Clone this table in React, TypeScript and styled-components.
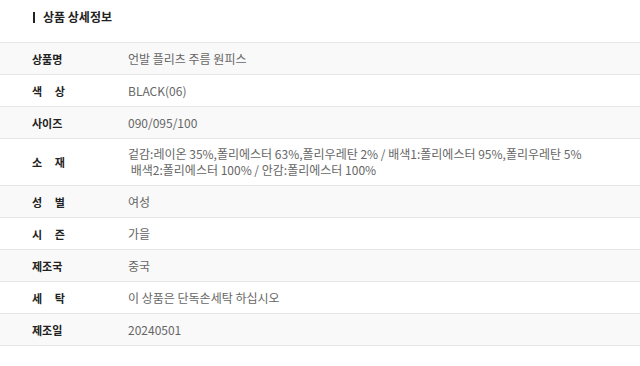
import styled, { createGlobalStyle } from 'styled-components';

const GlobalStyle = createGlobalStyle`
  html, body {
    margin: 0;
    padding: 0;
    background: #ffffff;
  }
  body {
    font-family: "Noto Sans CJK KR", "Noto Sans", sans-serif;
    color: #222;
  }
`;

type Spec = { label: string; spaced?: boolean; value: string[] };

const SPECS: Spec[] = [
  { label: '상품명', value: ['언발 플리츠 주름 원피스'] },
  { label: '색상', spaced: true, value: ['BLACK(06)'] },
  { label: '사이즈', value: ['090/095/100'] },
  {
    label: '소재',
    spaced: true,
    value: [
      '겉감:레이온 35%,폴리에스터 63%,폴리우레탄 2% / 배색1:폴리에스터 95%,폴리우레탄 5%',
      ' 배색2:폴리에스터 100% / 안감:폴리에스터 100%',
    ],
  },
  { label: '성별', spaced: true, value: ['여성'] },
  { label: '시즌', spaced: true, value: ['가을'] },
  { label: '제조국', value: ['중국'] },
  { label: '세탁', spaced: true, value: ['이 상품은 단독손세탁 하십시오'] },
  { label: '제조일', value: ['20240501'] },
];

const Section = styled.section`
  width: 640px;
  padding-top: 8px;
`;

const Title = styled.h2`
  display: flex;
  align-items: center;
  gap: 8px;
  height: 18px;
  margin: 0 0 16px;
  padding-left: 33px;
  font-size: 12px;
  font-weight: 700;
  color: #222;
  line-height: 18px;

  &::before {
    content: '';
    display: block;
    width: 2px;
    height: 11px;
    background: #222;
  }
`;

const Table = styled.div`
  border-top: 1px solid #e6e6e6;
`;

const Row = styled.div<{ $shade: boolean }>`
  display: grid;
  grid-template-columns: 128px 1fr;
  align-items: center;
  min-height: 31px;
  background: ${p => (p.$shade ? '#f9f9f9' : '#ffffff')};
  border-bottom: 1px solid #e6e6e6;
`;

const Label = styled.div`
  padding-left: 32px;
  font-size: 11px;
  font-weight: 700;
  color: #222;
  line-height: 16px;
`;

const Spaced = styled.span`
  display: inline-block;
  width: 33px;
  text-align: justify;
  text-align-last: justify;
`;

const Value = styled.div<{ $multi: boolean }>`
  padding: ${p => (p.$multi ? '7px 0' : '0')};
  font-size: 12px;
  color: #666;
  line-height: 16px;
  white-space: pre;
`;

export default function App() {
  return (
    <>
      <GlobalStyle />
      <Section>
        <Title>상품 상세정보</Title>
        <Table>
          {SPECS.map((s, i) => (
            <Row key={s.label} $shade={i % 2 === 0}>
              <Label>
                {s.spaced ? <Spaced>{s.label.split('').join(' ')}</Spaced> : s.label}
              </Label>
              <Value $multi={s.value.length > 1}>
                {s.value.map(line => (
                  <div key={line}>{line}</div>
                ))}
              </Value>
            </Row>
          ))}
        </Table>
      </Section>
    </>
  );
}
